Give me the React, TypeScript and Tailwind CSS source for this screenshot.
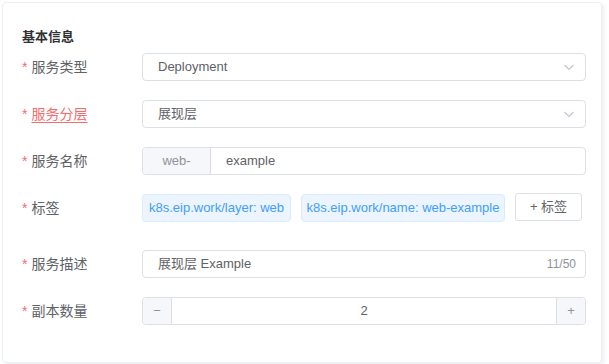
import { ReactNode } from "react";

function Chevron() {
  return (
    <svg width="12" height="12" viewBox="0 0 12 12" fill="none">
      <path d="M1.5 4 L6 8.5 L10.5 4" stroke="#c0c4cc" strokeWidth="1.1" />
    </svg>
  );
}

function Row({ label, children, active, className = "mb-[19px]" }: { label: string; children: ReactNode; active?: boolean; className?: string }) {
  return (
    <div className={`flex items-center ${className}`}>
      <div className="w-[120px] shrink-0 text-[14px] leading-[20px] text-[#606266]">
        <span className="mr-[4px] text-[#f56c6c]">*</span>
        <span className={active ? "text-[#f56c6c] underline underline-offset-[3px]" : ""}>{label}</span>
      </div>
      <div className="min-w-0 flex-1">{children}</div>
    </div>
  );
}

export default function App() {
  return (
    <div
      className="h-[364px] w-[609px] bg-white pl-[2px] pt-[2px] text-[#606266]"
      style={{ fontFamily: '"Liberation Sans", "Noto Sans CJK SC", sans-serif' }}
    >
      <div className="h-[361px] w-[600px] rounded-[4px] border border-[#ebeef5] bg-white pl-[19px] pr-[15px] pt-[25px] shadow-[3px_2px_3px_rgba(0,0,0,0.05)]">
        <div className="mb-[7px] text-[13px] font-semibold leading-[18px] text-[#303133]">基本信息</div>

        <Row label="服务类型">
          <div className="flex h-[28px] items-center justify-between rounded-[4px] border border-[#dcdfe6] pl-[15px] pr-[10px] text-[13px]">
            <span>Deployment</span>
            <Chevron />
          </div>
        </Row>

        <Row label="服务分层" active>
          <div className="flex h-[28px] items-center justify-between rounded-[4px] border border-[#dcdfe6] pl-[15px] pr-[10px] text-[13px]">
            <span>展现层</span>
            <Chevron />
          </div>
        </Row>

        <Row label="服务名称">
          <div className="flex h-[28px] rounded-[4px] border border-[#dcdfe6] text-[13px]">
            <div className="flex w-[68px] items-center justify-center rounded-l-[4px] border-r border-[#dcdfe6] bg-[#f5f7fa] text-[#909399]">
              web-
            </div>
            <div className="flex items-center pl-[15px]">example</div>
          </div>
        </Row>

        <Row label="标签" className="mb-[28px]">
          <div className="flex items-center gap-[10px] whitespace-nowrap text-[13px]">
            <span className="flex h-[28px] w-[149px] shrink-0 items-center justify-center rounded-[4px] border border-[#d9ecff] bg-[#ecf5ff] text-[#409eff]">
              k8s.eip.work/layer: web
            </span>
            <span className="flex h-[28px] w-[204px] shrink-0 items-center justify-center rounded-[4px] border border-[#d9ecff] bg-[#ecf5ff] text-[#409eff]">
              k8s.eip.work/name: web-example
            </span>
            <button className="flex h-[28px] w-[67px] shrink-0 -translate-y-[1px] items-center justify-center rounded-[3px] border border-[#dcdfe6] bg-white text-[13px] text-[#606266]">
              + 标签
            </button>
          </div>
        </Row>

        <Row label="服务描述">
          <div className="flex h-[28px] items-center justify-between rounded-[4px] border border-[#dcdfe6] pl-[15px] pr-[9px] text-[13px]">
            <span>展现层 Example</span>
            <span className="text-[12px] text-[#909399]">11/50</span>
          </div>
        </Row>

        <Row label="副本数量">
          <div className="flex h-[28px] rounded-[4px] border border-[#dcdfe6] text-[13px]">
            <div className="flex w-[29px] items-center justify-center rounded-l-[4px] border-r border-[#dcdfe6] bg-[#f5f7fa] text-[#909399]">
              −
            </div>
            <div className="flex flex-1 items-center justify-center">2</div>
            <div className="flex w-[29px] items-center justify-center rounded-r-[4px] border-l border-[#dcdfe6] bg-[#f5f7fa] text-[#909399]">
              +
            </div>
          </div>
        </Row>
      </div>
    </div>
  );
}
